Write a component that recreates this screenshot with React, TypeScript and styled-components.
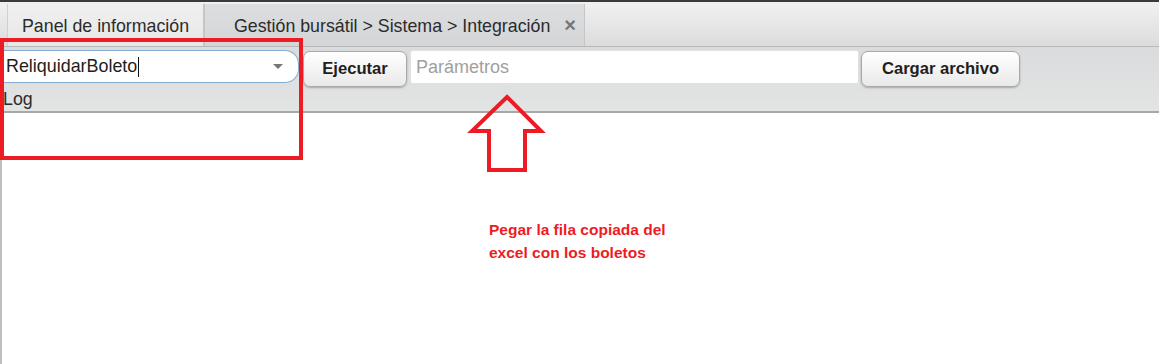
import React from 'react';
import styled, { createGlobalStyle } from 'styled-components';

const GlobalStyle = createGlobalStyle`
  html, body {
    margin: 0;
    padding: 0;
    background: #ffffff;
  }
  body {
    font-family: "Liberation Sans", Arial, sans-serif;
  }
`;

const Page = styled.div`
  position: relative;
  width: 1159px;
  height: 364px;
  overflow: hidden;
  display: flex;
  flex-direction: column;
  border-top: 2px solid #3a3a3a;
  box-sizing: border-box;
`;

const TabBar = styled.div`
  height: 44px;
  display: flex;
  align-items: flex-end;
  padding-left: 7px;
  background: linear-gradient(#f1f1f1, #dcdcdc);
  border-bottom: 1px solid #b9b9b9;
  flex-shrink: 0;
`;

const Tab = styled.div<{ active?: boolean }>`
  height: 42px;
  box-sizing: border-box;
  display: flex;
  align-items: center;
  padding: 2px 8px 0 ${(p) => (p.active ? '14px' : '29px')};
  font-size: 17.8px;
  color: #2b2b2b;
  background: ${(p) => (p.active ? 'linear-gradient(#f0f0f0, #e7e7e7)' : 'linear-gradient(#dcdee0, #d3d5d7)')};
  border-left: 1px solid ${(p) => (p.active ? '#d0d0d0' : '#c4c6c8')};
  border-right: 1px solid #c4c6c8;
  width: ${(p) => (p.active ? '197px' : '381px')};
`;

const TabTitle = styled.span`
  flex: 1;
  white-space: nowrap;
`;

const Close = styled.span`
  font-size: 20px;
  font-weight: bold;
  color: #777777;
  line-height: 1;
  margin-bottom: 2px;
`;

const Toolbar = styled.div`
  height: 64px;
  background: linear-gradient(#d9dbdc, #e3e4e4);
  border-bottom: 2px solid #a8a8a8;
  display: flex;
  flex-direction: column;
  flex-shrink: 0;
`;

const Row = styled.div`
  display: flex;
  align-items: flex-start;
  padding-top: 3px;
  height: 38px;
`;

const Combo = styled.div`
  width: 299px;
  height: 33px;
  box-sizing: border-box;
  background: #ffffff;
  border: 1px solid #86acd6;
  border-left: none;
  border-radius: 0 14px 14px 0;
  display: flex;
  align-items: center;
  padding: 0 15px 0 6px;
  font-size: 17.9px;
  color: #1e1e1e;
`;

const ComboText = styled.span`
  flex: 1;
`;

const Caret = styled.span`
  display: inline-block;
  width: 1px;
  height: 20px;
  background: #111;
  vertical-align: middle;
  margin-left: 1px;
`;

const Arrow = styled.span`
  width: 0;
  height: 0;
  border-left: 5px solid transparent;
  border-right: 5px solid transparent;
  border-top: 5px solid #777777;
`;

const Button = styled.button<{ w: number; ml: number }>`
  width: ${(p) => p.w}px;
  height: 36px;
  margin: 1px 0 0 ${(p) => p.ml}px;
  border: 1px solid #a9a9a9;
  border-radius: 7px;
  background: linear-gradient(#ffffff, #e9e9e9);
  box-shadow: 0 1px 2px rgba(0, 0, 0, 0.25);
  font-family: "Liberation Sans", Arial, sans-serif;
  font-weight: bold;
  font-size: 16.6px;
  color: #1f1f1f;
  padding: 0;
`;

const ParamInput = styled.div`
  width: 449px;
  height: 34px;
  margin-left: 3px;
  box-sizing: border-box;
  background: #ffffff;
  border: 1px solid #e2e2e2;
  border-radius: 3px;
  display: flex;
  align-items: center;
  padding-left: 5px;
  font-size: 18px;
  color: #a0a0a0;
`;

const LogLabel = styled.div`
  padding-left: 3px;
  font-size: 17.8px;
  color: #2b2b2b;
  line-height: 20px;
  margin-top: 1px;
`;

const Content = styled.div`
  flex: 1;
  background: #ffffff;
  border-left: 2px solid #bdbdbd;
`;

const Highlight = styled.div`
  position: absolute;
  left: 0;
  top: 36px;
  width: 303px;
  height: 122px;
  box-sizing: border-box;
  border: 4px solid #ed1c24;
`;

const Pointer = styled.svg`
  position: absolute;
  left: 460px;
  top: 85px;
`;

const Note = styled.div`
  position: absolute;
  left: 489px;
  top: 216px;
  font-family: "Liberation Sans", Arial, sans-serif;
  font-weight: bold;
  font-size: 15.5px;
  line-height: 23px;
  color: #ed1c24;
`;

export default function App() {
  return (
    <>
      <GlobalStyle />
      <Page>
        <TabBar>
          <Tab active>
            <TabTitle>Panel de información</TabTitle>
          </Tab>
          <Tab>
            <TabTitle>Gestión bursátil &gt; Sistema &gt; Integración</TabTitle>
            <Close>×</Close>
          </Tab>
        </TabBar>
        <Toolbar>
          <Row>
            <Combo>
              <ComboText>
                ReliquidarBoleto
                <Caret />
              </ComboText>
              <Arrow />
            </Combo>
            <Button w={104} ml={4}>Ejecutar</Button>
            <ParamInput>Parámetros</ParamInput>
            <Button w={159} ml={2}>Cargar archivo</Button>
          </Row>
          <LogLabel>Log</LogLabel>
        </Toolbar>
        <Content />
        <Highlight />
        <Pointer width="95" height="90" viewBox="0 0 95 90">
          <polygon
            points="47,10 81,44 65,44 65,83 29,83 29,44 12,44"
            fill="none"
            stroke="#ed1c24"
            strokeWidth="4"
            strokeLinejoin="miter"
          />
        </Pointer>
        <Note>
          Pegar la fila copiada del
          <br />
          excel con los boletos
        </Note>
      </Page>
    </>
  );
}
